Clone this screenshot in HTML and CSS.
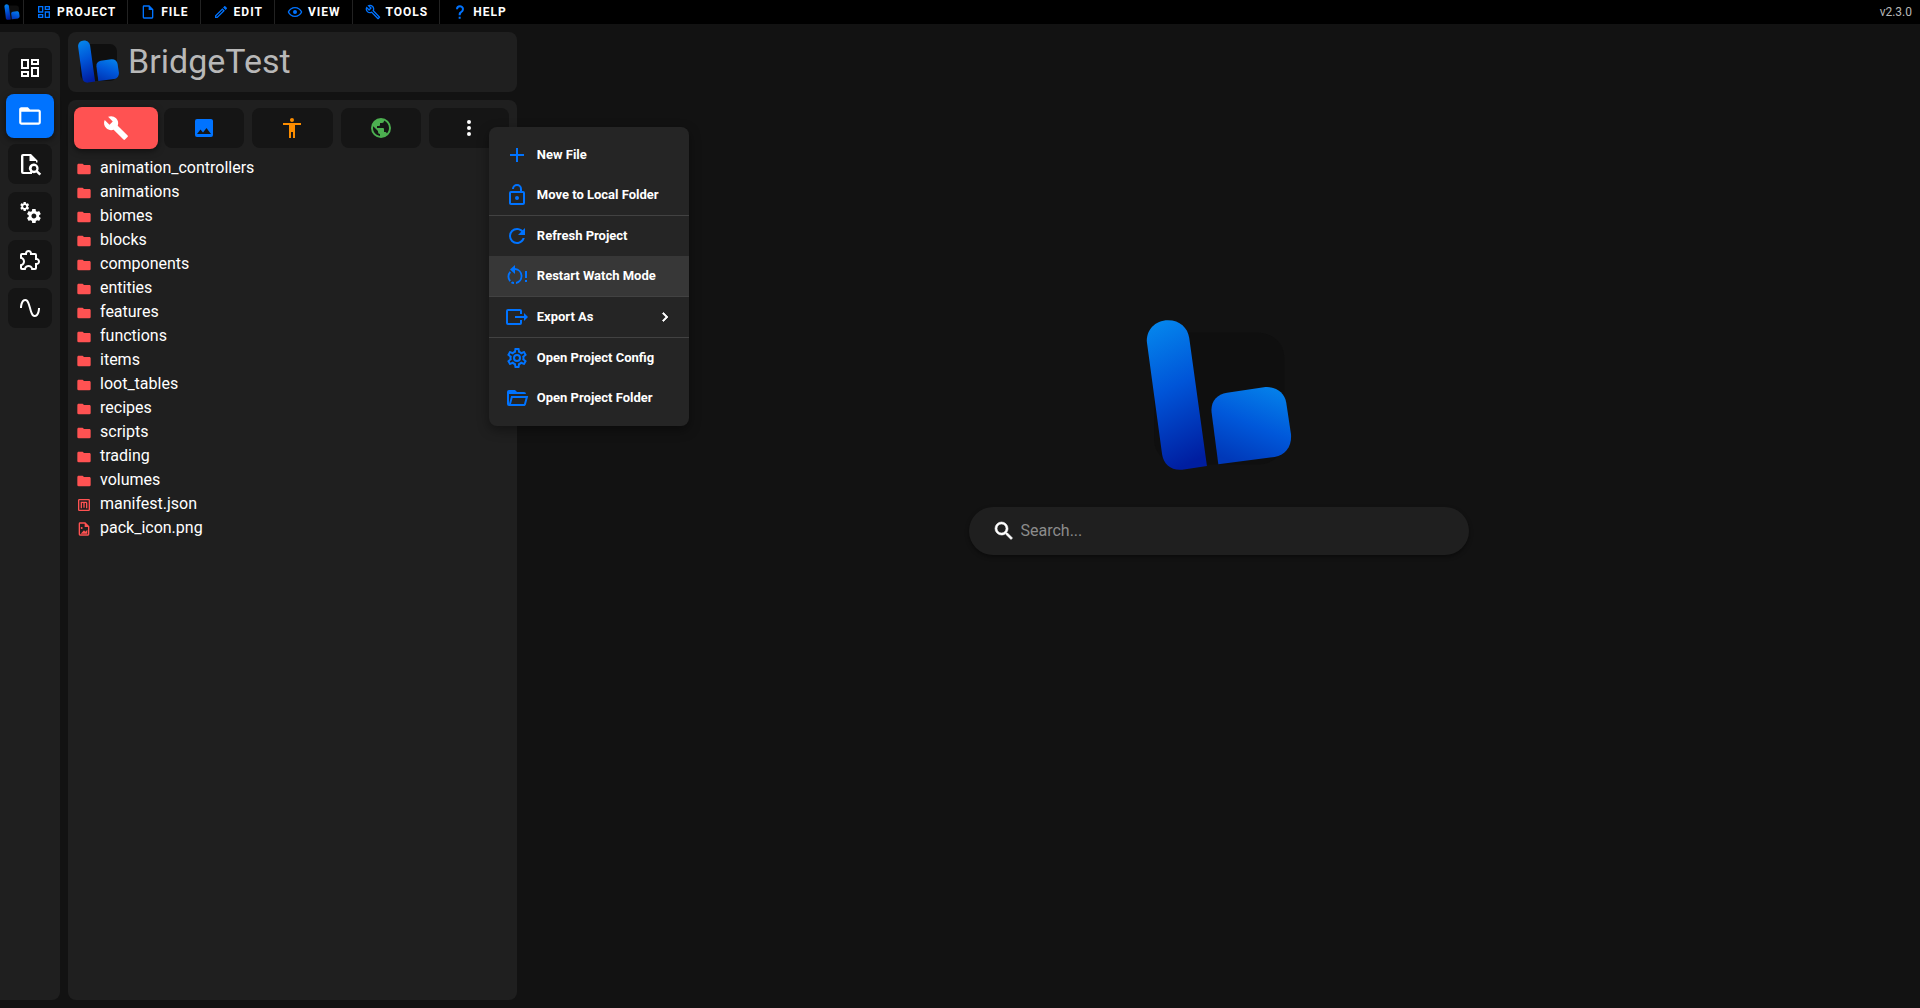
FILE: index.html
```html
<!DOCTYPE html>
<html lang="en">
<head>
<meta charset="utf-8">
<title>bridge. - BridgeTest</title>
<link rel="stylesheet" href="styles.css">
</head>
<body>
<svg class="defs" aria-hidden="true">
  <defs>
    <linearGradient id="bar-fill" x1="0.3" y1="0" x2="0.5" y2="1"><stop offset="0" stop-color="#0484ec"/><stop offset="0.45" stop-color="#0055d8"/><stop offset="1" stop-color="#001ea0"/></linearGradient>
    <linearGradient id="box-fill" x1="0.75" y1="0" x2="0.35" y2="1"><stop offset="0" stop-color="#0480ea"/><stop offset="0.5" stop-color="#0058da"/><stop offset="1" stop-color="#0038b8"/></linearGradient>
    <symbol id="logo" viewBox="70 58 454 454">
      <rect x="103" y="99" width="389" height="393" rx="75" fill="#0f0f0f"/>
      <path fill="url(#bar-fill)" d="M82 130C78 92 106 62 145 62C180 62 204 85 208 114L261 497L187 508C154 511 131 492 127 462Z"/>
      <path fill="url(#box-fill)" d="M275 338C271 306 289 283 321 278L431 262C466 258 493 277 498 309L512 402C515 437 497 464 463 470L295 492Z"/>
    </symbol>
    <symbol id="dashboard" viewBox="0 0 24 24"><path d="M19,5V7H15V5H19M9,5V11H5V5H9M19,13V19H15V13H19M9,17V19H5V17H9M21,3H13V9H21V3M11,3H3V13H11V3M21,11H13V21H21V11M11,15H3V21H11V15Z"/></symbol>
    <symbol id="file" viewBox="0 0 24 24"><path d="M14,2H6A2,2 0 0,0 4,4V20A2,2 0 0,0 6,22H18A2,2 0 0,0 20,20V8L14,2M18,20H6V4H13V9H18V20Z"/></symbol>
    <symbol id="pencil" viewBox="0 0 24 24"><path d="M14.06,9L15,9.94L5.92,19H5V18.08L14.06,9M17.66,3C17.41,3 17.15,3.1 16.96,3.29L15.13,5.12L18.88,8.87L20.71,7.04C21.1,6.65 21.1,6 20.71,5.63L18.37,3.29C18.17,3.09 17.92,3 17.66,3M14.06,6.19L3,17.25V21H6.75L17.81,9.94L14.06,6.19Z"/></symbol>
    <symbol id="eye" viewBox="0 0 24 24"><path d="M12,9A3,3 0 0,1 15,12A3,3 0 0,1 12,15A3,3 0 0,1 9,12A3,3 0 0,1 12,9M12,4.5C17,4.5 21.27,7.61 23,12C21.27,16.39 17,19.5 12,19.5C7,19.5 2.73,16.39 1,12C2.73,7.61 7,4.5 12,4.5M3.18,12C4.83,15.36 8.24,17.5 12,17.5C15.76,17.5 19.17,15.36 20.82,12C19.17,8.64 15.76,6.5 12,6.5C8.24,6.5 4.83,8.64 3.18,12Z"/></symbol>
    <symbol id="wrench-outline" viewBox="0 0 24 24"><path d="M22.61,19L13.53,9.91C14.46,7.57 14,4.81 12.09,2.91C9.79,0.61 6.21,0.4 3.66,2.26L7.5,6.11L6.08,7.52L2.25,3.69C0.39,6.23 0.6,9.82 2.9,12.11C4.76,13.97 7.47,14.46 9.79,13.59L18.9,22.7C19.29,23.09 19.92,23.09 20.31,22.7L22.61,20.4C23,20 23,19.39 22.61,19M19.61,20.59L10.15,11.13C9.54,11.58 8.86,11.85 8.15,11.95C6.79,12.15 5.36,11.74 4.32,10.7C3.37,9.76 2.93,8.5 3,7.26L6.09,10.35L10.33,6.11L7.24,3C8.48,2.95 9.73,3.39 10.68,4.33C11.76,5.41 12.17,6.9 11.92,8.29C11.8,9 11.5,9.66 11.04,10.25L20.5,19.7L19.61,20.59Z"/></symbol>
    <symbol id="wrench" viewBox="0 0 24 24"><path d="M22.7,19L13.6,9.9C14.5,7.6 14,4.9 12.1,3C10.1,1 7.1,0.6 4.7,1.7L9,6L6,9L1.6,4.7C0.4,7.1 0.9,10.1 2.9,12.1C4.8,14 7.5,14.5 9.8,13.6L18.9,22.7C19.3,23.1 19.9,23.1 20.3,22.7L22.6,20.4C23.1,20 23.1,19.3 22.7,19Z"/></symbol>
    <symbol id="help" viewBox="0 0 24 24"><path d="M10,19H13V22H10V19M12,2C17.35,2.22 19.68,7.62 16.5,11.67C15.67,12.67 14.33,13.33 13.67,14.17C13,15 13,16 13,17H10C10,15.33 10,13.92 10.67,12.92C11.33,11.92 12.67,11.33 13.5,10.67C15.92,8.43 15.32,5.26 12,5A3,3 0 0,0 9,8H6A6,6 0 0,1 12,2Z"/></symbol>
    <symbol id="folder-outline" viewBox="0 0 24 24"><path d="M20,18H4V8H20M20,6H12L10,4H4C2.89,4 2,4.89 2,6V18A2,2 0 0,0 4,20H20A2,2 0 0,0 22,18V8C22,6.89 21.1,6 20,6Z"/></symbol>
    <symbol id="file-search" viewBox="0 0 24 24"><path d="M13,2H5A2,2 0 0,0 3,4V20A2,2 0 0,0 5,22H14V20H5.4V4H11.5V9H18V10.5H19.5V8.5L13,2Z"/><path fill-rule="evenodd" d="M16,11.6A4.8,4.8 0 1,0 18.3,20.4L21.4,23.5L23.2,21.8L20,18.7A4.8,4.8 0 0,0 16,11.6M16,14A2.4,2.4 0 1,1 16,18.8A2.4,2.4 0 1,1 16,14Z"/></symbol>
    <symbol id="cogs" viewBox="0 0 24 24"><path d="M15.9,18.45C17.25,18.45 18.35,17.35 18.35,16C18.35,14.65 17.25,13.55 15.9,13.55C14.54,13.55 13.45,14.65 13.45,16C13.45,17.35 14.54,18.45 15.9,18.45M21.1,16.68L22.58,17.84C22.71,17.95 22.75,18.13 22.66,18.29L21.26,20.71C21.17,20.86 21,20.92 20.83,20.86L19.09,20.16C18.73,20.44 18.33,20.67 17.91,20.85L17.64,22.7C17.62,22.87 17.47,23 17.3,23H14.5C14.32,23 14.18,22.87 14.15,22.7L13.89,20.85C13.46,20.67 13.07,20.44 12.71,20.16L10.96,20.86C10.81,20.92 10.62,20.86 10.54,20.71L9.14,18.29C9.05,18.13 9.09,17.95 9.22,17.84L10.7,16.68L10.65,16L10.7,15.31L9.22,14.16C9.09,14.05 9.05,13.86 9.14,13.71L10.54,11.29C10.62,11.13 10.81,11.07 10.96,11.13L12.71,11.84C13.07,11.56 13.46,11.32 13.89,11.15L14.15,9.29C14.18,9.13 14.32,9 14.5,9H17.3C17.47,9 17.62,9.13 17.64,9.29L17.91,11.15C18.33,11.32 18.73,11.56 19.09,11.84L20.83,11.13C21,11.07 21.17,11.13 21.26,11.29L22.66,13.71C22.75,13.86 22.71,14.05 22.58,14.16L21.1,15.31L21.15,16L21.1,16.68M6.69,8.07C7.56,8.07 8.26,7.37 8.26,6.5C8.26,5.63 7.56,4.92 6.69,4.92A1.58,1.58 0 0,0 5.11,6.5C5.11,7.37 5.82,8.07 6.69,8.07M10.03,6.94L11,7.68C11.07,7.75 11.09,7.87 11.03,7.97L10.13,9.53C10.08,9.63 9.96,9.67 9.86,9.63L8.74,9.18L8,9.62L7.81,10.81C7.79,10.92 7.7,11 7.59,11H5.79C5.67,11 5.58,10.92 5.56,10.81L5.4,9.62L4.64,9.18L3.52,9.63C3.41,9.67 3.3,9.63 3.24,9.53L2.34,7.97C2.28,7.87 2.31,7.75 2.39,7.68L3.34,6.94L3.31,6.5L3.34,6.06L2.39,5.32C2.31,5.25 2.28,5.13 2.34,5.03L3.24,3.47C3.3,3.37 3.41,3.33 3.52,3.37L4.63,3.82L5.4,3.38L5.56,2.19C5.58,2.08 5.67,2 5.79,2H7.59C7.7,2 7.79,2.08 7.81,2.19L8,3.38L8.74,3.82L9.86,3.37C9.96,3.33 10.08,3.37 10.13,3.47L11.03,5.03C11.09,5.13 11.07,5.25 11,5.32L10.03,6.06L10.06,6.5L10.03,6.94Z"/></symbol>
    <symbol id="puzzle" viewBox="0 0 24 24"><path d="M22,13.5C22,15.26 20.7,16.72 19,16.96V20A2,2 0 0,1 17,22H13.2V21.7A2.7,2.7 0 0,0 10.5,19C9,19 7.8,20.21 7.8,21.7V22H4A2,2 0 0,1 2,20V16.2H2.3C3.79,16.2 5,15 5,13.5C5,12 3.79,10.8 2.3,10.8H2V7A2,2 0 0,1 4,5H7.04C7.28,3.3 8.74,2 10.5,2C12.26,2 13.72,3.3 13.96,5H17A2,2 0 0,1 19,7V10.04C20.7,10.28 22,11.74 22,13.5M17,15H18.5A1.5,1.5 0 0,0 20,13.5A1.5,1.5 0 0,0 18.5,12H17V7H12V5.5A1.5,1.5 0 0,0 10.5,4A1.5,1.5 0 0,0 9,5.5V7H4V9.12C5.76,9.8 7,11.5 7,13.5C7,15.5 5.75,17.2 4,17.88V20H6.12C6.8,18.25 8.5,17 10.5,17C12.5,17 14.2,18.25 14.88,20H17V15Z"/></symbol>
    <symbol id="sine" viewBox="0 0 24 24"><path d="M16.5,21C13.5,21 12.31,16.76 11.05,12.28C10.14,9.04 9,5 7.5,5C4.11,5 4,11.93 4,12H2C2,11.63 2.06,3 7.5,3C10.5,3 11.71,7.25 12.97,11.74C13.83,14.8 15,19 16.5,19C19.94,19 20.03,12.07 20.03,12H22.03C22.03,12.37 21.97,21 16.5,21Z"/></symbol>
    <symbol id="image" viewBox="0 0 24 24"><path d="M8.5,13.5L11,16.5L14.5,12L19,18H5M21,19V5C21,3.89 20.1,3 19,3H5A2,2 0 0,0 3,5V19A2,2 0 0,0 5,21H19A2,2 0 0,0 21,19Z"/></symbol>
    <symbol id="human" viewBox="0 0 24 24"><path d="M21,9H15V22H13V16H11V22H9V9H3V7H21M12,2A2,2 0 0,1 14,4A2,2 0 0,1 12,6C10.89,6 10,5.1 10,4C10,2.89 10.89,2 12,2Z"/></symbol>
    <symbol id="earth" viewBox="0 0 24 24"><path d="M17.9,17.39C17.64,16.59 16.89,16 16,16H15V13A1,1 0 0,0 14,12H8V10H10A1,1 0 0,0 11,9V7H13A2,2 0 0,0 15,5V4.59C17.93,5.77 20,8.64 20,12C20,14.08 19.2,15.97 17.9,17.39M11,19.93C7.05,19.44 4,16.08 4,12C4,11.38 4.08,10.78 4.21,10.21L9,15V16A2,2 0 0,0 11,18M12,2A10,10 0 0,0 2,12A10,10 0 0,0 12,22A10,10 0 0,0 22,12A10,10 0 0,0 12,2Z"/></symbol>
    <symbol id="dots" viewBox="0 0 24 24"><path d="M12,16A2,2 0 0,1 14,18A2,2 0 0,1 12,20A2,2 0 0,1 10,18A2,2 0 0,1 12,16M12,10A2,2 0 0,1 14,12A2,2 0 0,1 12,14A2,2 0 0,1 10,12A2,2 0 0,1 12,10M12,4A2,2 0 0,1 14,6A2,2 0 0,1 12,8A2,2 0 0,1 10,6A2,2 0 0,1 12,4Z"/></symbol>
    <symbol id="folder" viewBox="0 0 24 24"><path d="M10,4H4C2.89,4 2,4.89 2,6V18A2,2 0 0,0 4,20H20A2,2 0 0,0 22,18V8C22,6.89 21.1,6 20,6H12L10,4Z"/></symbol>
    <symbol id="manifest" viewBox="0 0 24 24"><path fill-rule="evenodd" d="M5,3H19A2,2 0 0,1 21,5V19A2,2 0 0,1 19,21H5A2,2 0 0,1 3,19V5A2,2 0 0,1 5,3M5,5V19H19V5ZM7,7H15A2,2 0 0,1 17,9V17H15V9H13V16H11V9H9V17H7Z"/></symbol>
    <symbol id="file-image" viewBox="0 0 24 24"><path d="M14,2L20,8V20A2,2 0 0,1 18,22H6A2,2 0 0,1 4,20V4A2,2 0 0,1 6,2H14M18,20V9H13V4H6V20H18M17,13V19H7L12,14L14,16M10,10.5A1.5,1.5 0 0,1 8.5,12A1.5,1.5 0 0,1 7,10.5A1.5,1.5 0 0,1 8.5,9A1.5,1.5 0 0,1 10,10.5Z"/></symbol>
    <symbol id="plus" viewBox="0 0 24 24"><path d="M19,13H13V19H11V13H5V11H11V5H13V11H19V13Z"/></symbol>
    <symbol id="lock-open" viewBox="0 0 24 24"><path d="M18,20V10H6V20H18M18,8A2,2 0 0,1 20,10V20A2,2 0 0,1 18,22H6C4.89,22 4,21.1 4,20V10A2,2 0 0,1 6,8H15V6A3,3 0 0,0 12,3A3,3 0 0,0 9,6H7A5,5 0 0,1 12,1A5,5 0 0,1 17,6V8H18M12,17A2,2 0 0,1 10,15A2,2 0 0,1 12,13A2,2 0 0,1 14,15A2,2 0 0,1 12,17Z"/></symbol>
    <symbol id="refresh" viewBox="0 0 24 24"><path d="M17.65,6.35C16.2,4.9 14.21,4 12,4A8,8 0 0,0 4,12A8,8 0 0,0 12,20C15.73,20 18.84,17.45 19.73,14H17.65C16.83,16.33 14.61,18 12,18A6,6 0 0,1 6,12A6,6 0 0,1 12,6C13.66,6 15.14,6.69 16.22,7.78L13,11H20V4L17.65,6.35Z"/></symbol>
    <symbol id="restart-alert" viewBox="0 0 24 24"><path d="M10,4V1L5,5.5L10,10V6A6.1,6.1 0 0,1 11,18V20A8.1,8.1 0 0,0 10,4M4.6,7.2A8.1,8.1 0 0,0 4.4,17.8L5.9,16.4A6.1,6.1 0 0,1 6,8.6ZM5.8,19A8.1,8.1 0 0,0 9,20V18A6.1,6.1 0 0,1 7.2,17.4ZM20,7H22V14H20ZM20,16H22V18H20Z"/></symbol>
    <symbol id="export" viewBox="0 0 24 24"><path d="M3,4H15A2,2 0 0,1 17,6V9H15V6H3V18H15V15H17V18A2,2 0 0,1 15,20H3A2,2 0 0,1 1,18V6A2,2 0 0,1 3,4M19,8L23,12L19,16V13H10V11H19Z"/></symbol>
    <symbol id="cog" viewBox="0 0 24 24"><path d="M12,8A4,4 0 0,1 16,12A4,4 0 0,1 12,16A4,4 0 0,1 8,12A4,4 0 0,1 12,8M12,10A2,2 0 0,0 10,12A2,2 0 0,0 12,14A2,2 0 0,0 14,12A2,2 0 0,0 12,10M10,22C9.75,22 9.54,21.82 9.5,21.58L9.13,18.93C8.5,18.68 7.96,18.34 7.44,17.94L4.95,18.95C4.73,19.03 4.46,18.95 4.34,18.73L2.34,15.27C2.21,15.05 2.27,14.78 2.46,14.63L4.57,12.97L4.5,12L4.57,11L2.46,9.37C2.27,9.22 2.21,8.95 2.34,8.73L4.34,5.27C4.46,5.05 4.73,4.96 4.95,5.05L7.44,6.05C7.96,5.66 8.5,5.32 9.13,5.07L9.5,2.42C9.54,2.18 9.75,2 10,2H14C14.25,2 14.46,2.18 14.5,2.42L14.87,5.07C15.5,5.32 16.04,5.66 16.56,6.05L19.05,5.05C19.27,4.96 19.54,5.05 19.66,5.27L21.66,8.73C21.79,8.95 21.73,9.22 21.54,9.37L19.43,11L19.5,12L19.43,13L21.54,14.63C21.73,14.78 21.79,15.05 21.66,15.27L19.66,18.73C19.54,18.95 19.27,19.04 19.05,18.95L16.56,17.95C16.04,18.34 15.5,18.68 14.87,18.93L14.5,21.58C14.46,21.82 14.25,22 14,22H10M11.25,4L10.88,6.61C9.68,6.86 8.62,7.5 7.85,8.39L5.44,7.35L4.69,8.65L6.8,10.2C6.4,11.37 6.4,12.64 6.8,13.8L4.68,15.36L5.43,16.66L7.86,15.62C8.63,16.5 9.68,17.14 10.87,17.38L11.24,20H12.76L13.13,17.39C14.32,17.14 15.37,16.5 16.14,15.62L18.57,16.66L19.32,15.36L17.2,13.81C17.6,12.64 17.6,11.37 17.2,10.2L19.31,8.65L18.56,7.35L16.15,8.39C15.38,7.5 14.32,6.86 13.12,6.62L12.75,4H11.25Z"/></symbol>
    <symbol id="folder-open" viewBox="0 0 24 24"><path d="M6.1,10L4,18V8H21A2,2 0 0,0 19,6H12L10,4H4A2,2 0 0,0 2,6V18A2,2 0 0,0 4,20H19C19.9,20 20.7,19.4 20.9,18.5L23.2,10H6.1M19,18H6L7.6,12H20.6L19,18Z"/></symbol>
    <symbol id="chevron" viewBox="0 0 24 24"><path stroke="currentColor" d="M8.59,16.58L13.17,12L8.59,7.41L10,6L16,12L10,18L8.59,16.58Z"/></symbol>
    <symbol id="magnify" viewBox="0 0 24 24"><path stroke="currentColor" stroke-width="0.6" d="M9.5,3A6.5,6.5 0 0,1 16,9.5C16,11.11 15.41,12.59 14.44,13.73L14.71,14H15.5L20.5,19L19,20.5L14,15.5V14.71L13.73,14.44C12.59,15.41 11.11,16 9.5,16A6.5,6.5 0 0,1 3,9.5A6.5,6.5 0 0,1 9.5,3M9.5,5C7,5 5,7 5,9.5C5,12 7,14 9.5,14C12,14 14,12 14,9.5C14,7 12,5 9.5,5Z"/></symbol>
  </defs>
</svg>

<header class="toolbar">
  <span class="brand"><svg><use href="#logo"/></svg></span>
  <nav class="menubar">
    <button type="button"><svg><use href="#dashboard"/></svg>PROJECT</button>
    <button type="button"><svg><use href="#file"/></svg>FILE</button>
    <button type="button"><svg><use href="#pencil"/></svg>EDIT</button>
    <button type="button"><svg><use href="#eye"/></svg>VIEW</button>
    <button type="button"><svg><use href="#wrench-outline"/></svg>TOOLS</button>
    <button type="button"><svg><use href="#help"/></svg>HELP</button>
  </nav>
  <span class="version">v2.3.0</span>
</header>

<div class="workspace">
  <nav class="rail">
    <button type="button" aria-label="Projects"><svg><use href="#dashboard"/></svg></button>
    <button type="button" class="active" aria-label="Pack explorer"><svg><use href="#folder-outline"/></svg></button>
    <button type="button" aria-label="Find and replace"><svg><use href="#file-search"/></svg></button>
    <button type="button" aria-label="Compiler"><svg><use href="#cogs"/></svg></button>
    <button type="button" aria-label="Extensions"><svg><use href="#puzzle"/></svg></button>
    <button type="button" aria-label="Snippets"><svg><use href="#sine"/></svg></button>
  </nav>

  <aside class="explorer">
    <div class="project">
      <svg><use href="#logo"/></svg>
      <h1>BridgeTest</h1>
    </div>
    <section class="packs">
      <div class="tabs">
        <button type="button" class="behavior" aria-label="Behavior pack"><svg><use href="#wrench"/></svg></button>
        <button type="button" class="resource" aria-label="Resource pack"><svg><use href="#image"/></svg></button>
        <button type="button" class="skin" aria-label="Skin pack"><svg><use href="#human"/></svg></button>
        <button type="button" class="world" aria-label="World template"><svg><use href="#earth"/></svg></button>
        <div class="more">
          <button type="button" aria-label="More"><svg><use href="#dots"/></svg></button>
          <div class="menu">
            <button type="button"><svg><use href="#plus"/></svg>New File</button>
            <button type="button"><svg><use href="#lock-open"/></svg>Move to Local Folder</button>
            <hr>
            <button type="button"><svg><use href="#refresh"/></svg>Refresh Project</button>
            <button type="button" class="hovered"><svg><use href="#restart-alert"/></svg>Restart Watch Mode</button>
            <hr>
            <button type="button"><svg><use href="#export"/></svg>Export As<svg class="chevron"><use href="#chevron"/></svg></button>
            <hr>
            <button type="button"><svg><use href="#cog"/></svg>Open Project Config</button>
            <button type="button"><svg><use href="#folder-open"/></svg>Open Project Folder</button>
          </div>
        </div>
      </div>
      <ul class="tree">
        <li><svg><use href="#folder"/></svg>animation_controllers</li>
        <li><svg><use href="#folder"/></svg>animations</li>
        <li><svg><use href="#folder"/></svg>biomes</li>
        <li><svg><use href="#folder"/></svg>blocks</li>
        <li><svg><use href="#folder"/></svg>components</li>
        <li><svg><use href="#folder"/></svg>entities</li>
        <li><svg><use href="#folder"/></svg>features</li>
        <li><svg><use href="#folder"/></svg>functions</li>
        <li><svg><use href="#folder"/></svg>items</li>
        <li><svg><use href="#folder"/></svg>loot_tables</li>
        <li><svg><use href="#folder"/></svg>recipes</li>
        <li><svg><use href="#folder"/></svg>scripts</li>
        <li><svg><use href="#folder"/></svg>trading</li>
        <li><svg><use href="#folder"/></svg>volumes</li>
        <li><svg><use href="#manifest"/></svg>manifest.json</li>
        <li><svg><use href="#file-image"/></svg>pack_icon.png</li>
      </ul>
    </section>
  </aside>

  <main class="welcome">
    <svg class="hero"><use href="#logo"/></svg>
    <label class="search">
      <svg><use href="#magnify"/></svg>
      <input type="text" placeholder="Search..." aria-label="Search">
    </label>
  </main>
</div>
</body>
</html>
```
FILE: styles.css
```css
* { box-sizing: border-box; }

body {
  margin: 0;
  min-height: 100vh;
  display: flex;
  flex-direction: column;
  background: #121212;
  color: #fff;
  font-family: Roboto, "Liberation Sans", sans-serif;
  font-size: 16px;
}

svg { fill: currentColor; flex: none; width: 24px; height: 24px; }
.defs { position: absolute; width: 0; height: 0; }

button {
  display: flex;
  align-items: center;
  margin: 0;
  padding: 0;
  border: 0;
  background: none;
  color: inherit;
  font: inherit;
}

/* Top toolbar */
.toolbar {
  display: flex;
  align-items: stretch;
  height: 24px;
  background: #000;
}
.brand {
  display: flex;
  align-items: center;
  padding: 0 3px 0 4px;
  border-right: 1px solid #222;
}
.brand svg { width: 16px; height: 16px; }
.menubar { display: flex; }
.menubar button {
  gap: 5px;
  padding: 0 11px 0 12px;
  border-right: 1px solid #222;
  font-size: 12px;
  font-weight: 700;
  letter-spacing: 1px;
}
.menubar button:last-child { border-right: 0; }
.menubar svg { width: 16px; height: 16px; color: #0073ff; }
.version {
  margin-left: auto;
  padding-right: 8px;
  color: #b8b8b8;
  font-size: 12px;
  line-height: 24px;
}

/* Workspace */
.workspace {
  flex: 1;
  display: flex;
  gap: 8px;
  padding: 8px 0;
}
.rail {
  width: 60px;
  display: flex;
  flex-direction: column;
  gap: 8px;
  padding: 16px 8px;
  border-radius: 0 8px 8px 0;
  background: #1f1f1f;
}
.rail button {
  height: 40px;
  justify-content: center;
  border-radius: 8px;
  background: #151515;
}
.rail .active {
  height: 44px;
  margin: -2px;
  background: #0073ff;
  box-shadow: 0 2px 6px rgba(0, 0, 0, .5);
}
.rail .active svg, .tabs .behavior svg { width: 26px; height: 26px; }

.explorer {
  flex: 0 0 449px;
  display: flex;
  flex-direction: column;
  gap: 8px;
}
.project {
  display: flex;
  align-items: center;
  gap: 8px;
  height: 60px;
  padding: 0 9px 2px;
  border-radius: 8px;
  background: #1f1f1f;
}
.project svg { width: 43px; height: 43px; }
.project h1 {
  margin: 0;
  color: #b8b8b8;
  font-size: 34px;
  font-weight: 400;
}
.packs {
  flex: 1;
  padding: 8px;
  border-radius: 8px;
  background: #1f1f1f;
}
.tabs {
  display: grid;
  grid-template-columns: repeat(5, 1fr);
  gap: 8px;
}
.tabs > button, .more > button {
  width: 100%;
  height: 40px;
  justify-content: center;
  border-radius: 8px;
  background: #151515;
}
.tabs .behavior {
  width: auto;
  height: 42px;
  margin: -1px -2px;
  background: #ff5252;
  box-shadow: 0 2px 6px rgba(0, 0, 0, .5);
}
.resource { color: #0073ff; }
.skin { color: #fb8c00; }
.world { color: #4caf50; }

.tree {
  margin: 0;
  padding: 7px 0 0;
  list-style: none;
}
.tree li {
  display: flex;
  align-items: center;
  gap: 8px;
  height: 24px;
}
.tree svg {
  width: 16px;
  height: 16px;
  margin-top: 3px;
  color: #ff5252;
}

/* Pack options popup */
.more { position: relative; }
.menu {
  position: absolute;
  top: 19px;
  left: 60px;
  z-index: 1;
  width: 200px;
  padding: 8px 0;
  border-radius: 8px;
  background: #252525;
  box-shadow: 0 4px 12px rgba(0, 0, 0, .4);
}
.menu button {
  width: 100%;
  height: 40px;
  gap: 8px;
  padding: 0 15px 1px 16px;
  font-size: 13px;
  font-weight: 700;
}
.menu .hovered { background: #373737; }
.menu svg { color: #0073ff; }
.menu .chevron {
  width: 18px;
  height: 18px;
  margin-left: auto;
  color: #fff;
}
.menu hr {
  height: 1px;
  margin: 0;
  border: 0;
  background: #424242;
}

/* Welcome screen */
.welcome {
  flex: 1;
  display: flex;
  flex-direction: column;
  align-items: center;
  gap: 36px;
  padding: 287px 8px 0 0;
}
.hero { width: 152px; height: 152px; }
.search {
  display: flex;
  align-items: center;
  gap: 5px;
  width: 500px;
  max-width: 100%;
  height: 48px;
  padding: 0 23px 1px;
  border-radius: 24px;
  background: #1f1f1f;
  box-shadow: 0 2px 4px rgba(0, 0, 0, .4);
}
.search input {
  flex: 1;
  min-width: 0;
  padding: 0;
  border: 0;
  outline: 0;
  background: none;
  color: #fff;
  font: inherit;
}
.search input::placeholder { color: #8c8c8c; opacity: 1; }
```
